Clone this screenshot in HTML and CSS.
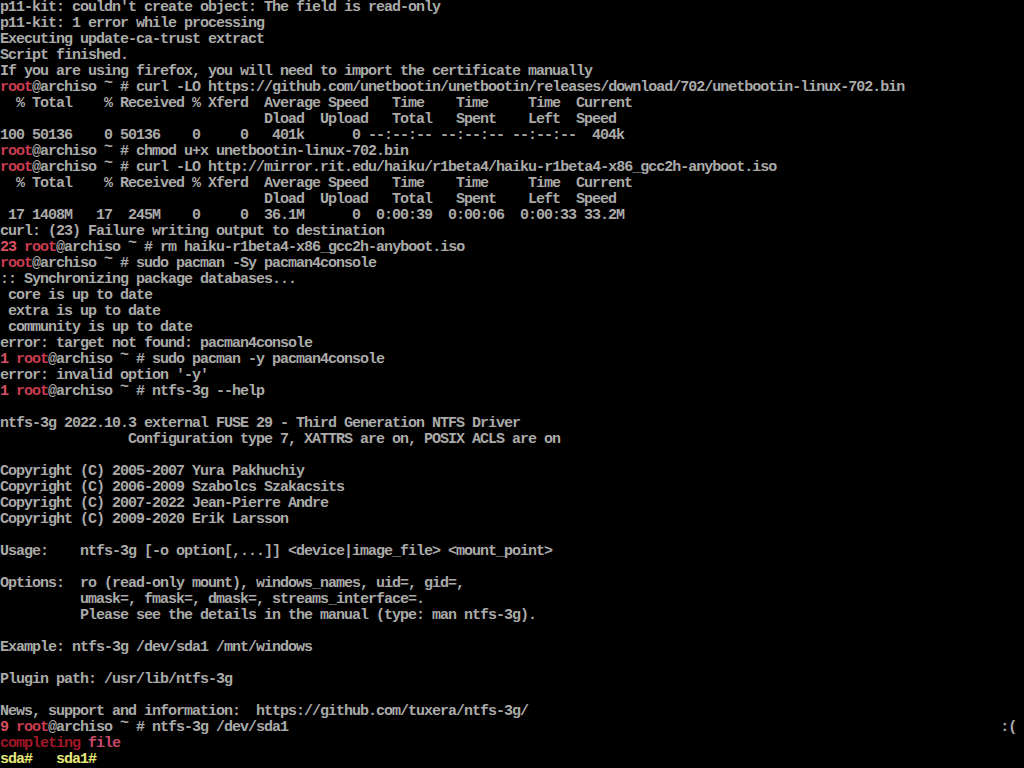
FILE: index.html
```html
<!DOCTYPE html>
<html lang="en">
<head>
<meta charset="utf-8">
<title>console</title>
<link rel="stylesheet" href="styles.css">
</head>
<body>
<pre class="tty">p11-kit: couldn't create object: The field is read-only
p11-kit: 1 error while processing
Executing update-ca-trust extract
Script finished.
If you are using firefox, you will need to import the certificate manually
<span class="r">root</span>@archiso <span class="tl">~</span> # curl -LO https://github.com/unetbootin/unetbootin/releases/download/702/unetbootin-linux-702.bin
  % Total    % Received % Xferd  Average Speed   Time    Time     Time  Current
                                 Dload  Upload   Total   Spent    Left  Speed
100 50136    0 50136    0     0   401k      0 --:--:-- --:--:-- --:--:--  404k
<span class="r">root</span>@archiso <span class="tl">~</span> # chmod u+x unetbootin-linux-702.bin
<span class="r">root</span>@archiso <span class="tl">~</span> # curl -LO http://mirror.rit.edu/haiku/r1beta4/haiku-r1beta4-x86_gcc2h-anyboot.iso
  % Total    % Received % Xferd  Average Speed   Time    Time     Time  Current
                                 Dload  Upload   Total   Spent    Left  Speed
 17 1408M   17  245M    0     0  36.1M      0  0:00:39  0:00:06  0:00:33 33.2M
curl: (23) Failure writing output to destination
<span class="rn">23</span> <span class="r">root</span>@archiso <span class="tl">~</span> # rm haiku-r1beta4-x86_gcc2h-anyboot.iso
<span class="r">root</span>@archiso <span class="tl">~</span> # sudo pacman -Sy pacman4console
:: Synchronizing package databases...
 core is up to date
 extra is up to date
 community is up to date
error: target not found: pacman4console
<span class="rn">1</span> <span class="r">root</span>@archiso <span class="tl">~</span> # sudo pacman -y pacman4console
error: invalid option '-y'
<span class="rn">1</span> <span class="r">root</span>@archiso <span class="tl">~</span> # ntfs-3g --help

ntfs-3g 2022.10.3 external FUSE 29 - Third Generation NTFS Driver
                Configuration type 7, XATTRS are on, POSIX ACLS are on

Copyright (C) 2005-2007 Yura Pakhuchiy
Copyright (C) 2006-2009 Szabolcs Szakacsits
Copyright (C) 2007-2022 Jean-Pierre Andre
Copyright (C) 2009-2020 Erik Larsson

Usage:    ntfs-3g [-o option[,...]] &lt;device|image_file&gt; &lt;mount_point&gt;

Options:  ro (read-only mount), windows_names, uid=, gid=,
          umask=, fmask=, dmask=, streams_interface=.
          Please see the details in the manual (type: man ntfs-3g).

Example: ntfs-3g /dev/sda1 /mnt/windows

Plugin path: /usr/lib/ntfs-3g

News, support and information:  https://github.com/tuxera/ntfs-3g/
<span class="rn">9</span> <span class="r">root</span>@archiso <span class="tl">~</span> # ntfs-3g /dev/sda1                                                                                         :(
<span class="cd">completing</span> <span class="cf">file</span>
<span class="y">sda#   sda1#</span></pre>
</body>
</html>
```

FILE: styles.css
```css
html, body {
  margin: 0;
  padding: 0;
  background: #000;
  width: 1024px;
  height: 768px;
  overflow: hidden;
}

.tty {
  margin: 0;
  padding: 0;
  color: #aaaaaa;
  font-family: "Liberation Mono", "DejaVu Sans Mono", monospace;
  font-size: 15px;
  letter-spacing: -1px;
  line-height: 16px;
  font-weight: bold;
  white-space: pre;
}

.r { color: #c83c50; }
.rn { color: #d85062; }
.cd { color: #a01828; }
.cf { color: #c84a68; }
.y { color: #e8e87a; }

.tl {
  position: relative;
  top: -4px;
}
```
